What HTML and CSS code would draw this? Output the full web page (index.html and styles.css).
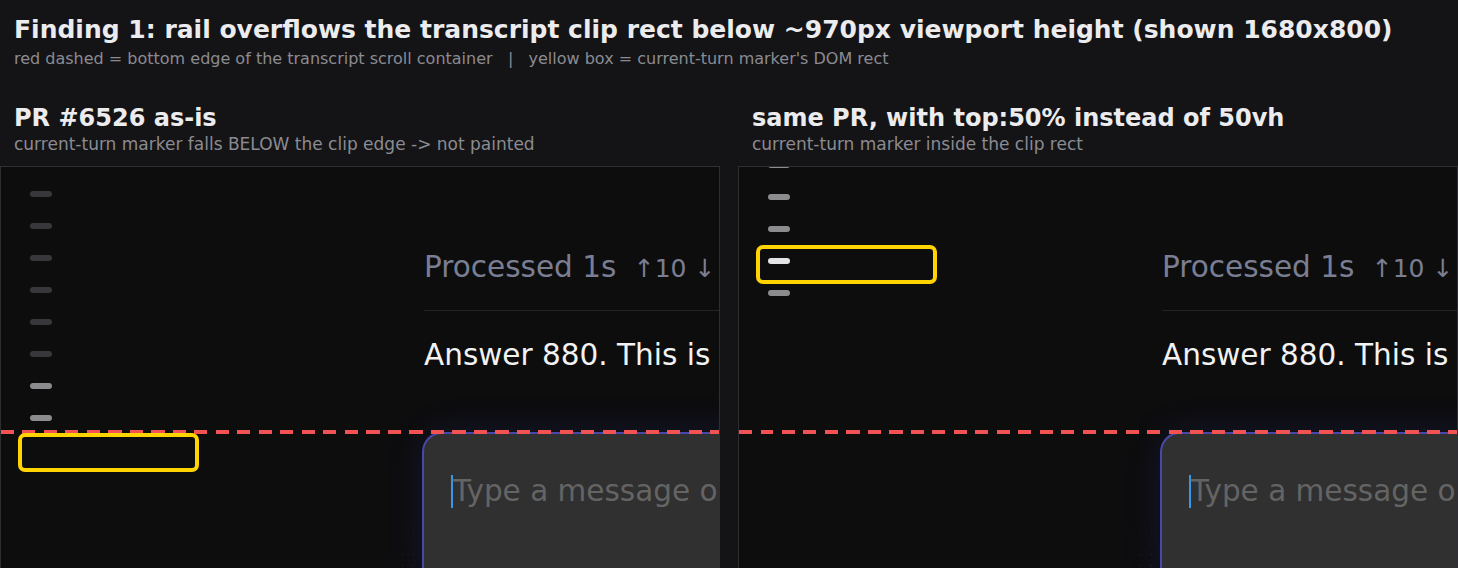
FILE: index.html
```html
<!DOCTYPE html>
<html>
<head>
<meta charset="utf-8">
<link rel="stylesheet" href="styles.css">
</head>
<body>
<header class="top">
  <h1 class="title">Finding 1: rail overflows the transcript clip rect below ~970px viewport height (shown 1680x800)</h1>
  <p class="lead">red dashed = bottom edge of the transcript scroll container &nbsp;&nbsp;|&nbsp;&nbsp; yellow box = current-turn marker's DOM rect</p>
</header>
<main class="cols">
  <section class="col">
    <h2 class="head">PR #6526 as-is</h2>
    <p class="sub">current-turn marker falls BELOW the clip edge -&gt; not painted</p>
    <div class="panel">
      <div class="scroll">
        <div class="rail rail-low">
          <i class="mk"></i><i class="mk"></i><i class="mk"></i><i class="mk"></i><i class="mk"></i><i class="mk"></i>
          <i class="mk mk-near"></i><i class="mk mk-near"></i><i class="mk mk-cur"></i><i class="mk mk-near"></i>
        </div>
        <div class="transcript">
          <div class="meta">Processed 1s <span class="tok">↑10 ↓</span></div>
          <div class="answer">Answer 880. This is</div>
        </div>
      </div>
      <div class="composer-area">
        <div class="composer"><span class="caret"></span><span class="ph">Type a message or ask a follow-up</span></div>
      </div>
      <div class="clipline"></div>
      <div class="hl hl-low"></div>
    </div>
  </section>
  <section class="col">
    <h2 class="head">same PR, with top:50% instead of 50vh</h2>
    <p class="sub">current-turn marker inside the clip rect</p>
    <div class="panel">
      <div class="scroll">
        <div class="rail rail-mid">
          <i class="mk"></i><i class="mk"></i><i class="mk"></i><i class="mk"></i><i class="mk"></i>
          <i class="mk mk-near"></i><i class="mk mk-near"></i><i class="mk mk-near"></i><i class="mk mk-cur"></i><i class="mk mk-near"></i>
        </div>
        <div class="transcript">
          <div class="meta">Processed 1s <span class="tok">↑10 ↓</span></div>
          <div class="answer">Answer 880. This is</div>
        </div>
      </div>
      <div class="composer-area">
        <div class="composer"><span class="caret"></span><span class="ph">Type a message or ask a follow-up</span></div>
      </div>
      <div class="clipline"></div>
      <div class="hl hl-mid"></div>
    </div>
  </section>
</main>
</body>
</html>
```
FILE: styles.css
```css
* { box-sizing: border-box; }
html, body { margin: 0; padding: 0; }
body {
  width: 1458px;
  height: 568px;
  overflow: hidden;
  background: #141416;
  font-family: "DejaVu Sans", sans-serif;
  color: #ececef;
}
.top { padding: 16px 14px 0; }
.title {
  margin: 0;
  font-size: 25px;
  line-height: 28px;
  font-weight: bold;
  color: #ececef;
  white-space: nowrap;
}
.lead {
  margin: 5px 0 0;
  font-size: 16px;
  line-height: 20px;
  color: #8b8b92;
  white-space: nowrap;
}
.cols {
  display: flex;
  gap: 18px;
  margin-top: 36px;
}
.col { width: 720px; flex: none; }
.head {
  margin: 0;
  padding-left: 14px;
  font-size: 24px;
  line-height: 26px;
  font-weight: bold;
  color: #ececef;
  white-space: nowrap;
}
.sub {
  margin: 3px 0 0;
  padding-left: 14px;
  font-size: 17px;
  line-height: 20px;
  color: #8b8b92;
  white-space: nowrap;
}
.panel {
  position: relative;
  margin-top: 12px;
  height: 420px;
  border: 1px solid #2f2f33;
  background: #0d0d0e;
  overflow: hidden;
  display: flex;
  flex-direction: column;
}
.panel::before {
  content: "";
  position: absolute;
  left: 300px;
  top: 190px;
  width: 560px;
  height: 320px;
  background:
    radial-gradient(circle, rgba(70, 80, 170, 0.4) 0.9px, transparent 1.4px) 0 0 / 10.7px 10.7px;
  -webkit-mask-image: radial-gradient(ellipse 55% 55% at 62% 78%, #000 40%, transparent 100%);
  mask-image: radial-gradient(ellipse 55% 55% at 62% 78%, #000 40%, transparent 100%);
  pointer-events: none;
}
.panel::after {
  content: "";
  position: absolute;
  left: 300px;
  top: 220px;
  width: 560px;
  height: 300px;
  background: radial-gradient(ellipse 40% 45% at 60% 80%, rgba(50, 50, 170, 0.2), transparent 70%);
  pointer-events: none;
}
.scroll {
  position: relative;
  z-index: 1;
  height: 265px;
  flex: none;
  overflow: hidden;
  display: flex;
}
.rail {
  width: 423px;
  flex: none;
  padding-left: 29px;
  display: flex;
  flex-direction: column;
  gap: 26px;
}
.rail-low { margin-top: 24px; }
.rail-mid { margin-top: -165px; }
.mk {
  display: block;
  width: 22px;
  height: 6px;
  border-radius: 3px;
  background: #38383c;
  flex: none;
}
.mk-near { background: #8c8c8e; }
.mk-cur { background: #e4e4e6; }
.transcript {
  flex: 1;
  min-width: 0;
  overflow: hidden;
  white-space: nowrap;
}
.meta {
  padding-top: 82px;
  padding-bottom: 23px;
  border-bottom: 1px solid #242426;
  font-size: 29.5px;
  line-height: 36px;
  color: #7a7e92;
}
.tok {
  font-size: 25px;
  margin-left: 8px;
}
.answer {
  margin-top: 26px;
  font-size: 29.5px;
  line-height: 36px;
  color: #f2f2f2;
}
.composer-area {
  position: relative;
  z-index: 1;
  flex: 1;
  padding-left: 421px;
}
.composer {
  height: 100%;
  margin-right: -40px;
  border: 2px solid #4848aa;
  border-right: 0;
  border-bottom: 0;
  border-radius: 20px 0 0 0;
  background: #303030;
  padding: 39px 0 0 27px;
  white-space: nowrap;
  overflow: hidden;
  box-shadow: 0 0 36px rgba(60, 60, 200, 0.16);
}
.caret {
  display: inline-block;
  width: 2px;
  height: 33px;
  background: #3a96e8;
  vertical-align: top;
  margin-top: 2px;
}
.ph {
  font-size: 29.5px;
  line-height: 36px;
  color: #646464;
  vertical-align: top;
}
.clipline {
  position: absolute;
  z-index: 2;
  left: 0;
  right: 0;
  top: 263px;
  height: 4px;
  background: repeating-linear-gradient(90deg, #f25252 0 13px, transparent 13px 21.5px);
}
.hl {
  position: absolute;
  z-index: 3;
  left: 17px;
  width: 181px;
  height: 39px;
  border: 4px solid #ffd400;
  border-radius: 7px;
}
.hl-low { top: 266px; }
.hl-mid { top: 78px; }
```
